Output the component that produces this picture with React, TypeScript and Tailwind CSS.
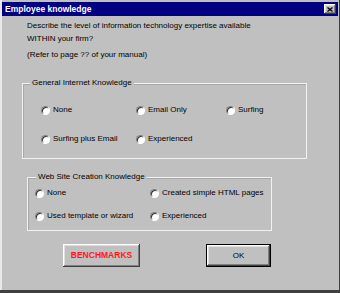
import React from 'react';

const raised =
  'shadow-[inset_-1px_-1px_#404040,inset_1px_1px_#ffffff,inset_-2px_-2px_#808080,inset_2px_2px_#dfdfdf]';

const Radio: React.FC<{ label: string }> = ({ label }) => (
  <label className="flex items-center gap-[3px] h-[12px] leading-[12px] whitespace-nowrap">
    <span className="w-[9px] h-[9px] shrink-0 rounded-full bg-white border border-t-[#808080] border-l-[#808080] border-b-white border-r-white shadow-[inset_1px_1px_0_#303030]" />
    <span>{label}</span>
  </label>
);

const GroupBox: React.FC<{ title: string; className: string; legendLeft: string; children: React.ReactNode }> = ({
  title,
  className,
  legendLeft,
  children,
}) => (
  <div className={`relative border border-[#f2f2f2] shadow-[inset_1px_1px_0_#a8a8a8] ${className}`}>
    <span className={`absolute -top-[6px] ${legendLeft} bg-[#c0c0c0] px-[2px] leading-[10px]`}>{title}</span>
    {children}
  </div>
);

export default function App() {
  return (
    <div
      className="w-[340px] h-[293px] bg-[#c0c0c0] flex flex-col text-[8px] text-black shadow-[inset_-1px_-3px_#404040,inset_2px_0_#e8e8e8]"
      style={{ fontFamily: '"Liberation Sans", Arial, sans-serif' }}
    >
      {/* Title bar */}
      <div className="mt-[2px] mx-[2px] h-[14px] bg-[#000080] flex items-center justify-between pl-[3px] pr-[2px]">
        <span className="text-white font-bold text-[8.5px] leading-[14px]">Employee knowledge</span>
        <button className={`w-[12px] h-[10px] bg-[#c0c0c0] flex items-center justify-center ${raised}`}>
          <svg width="6" height="5" viewBox="0 0 6 5">
            <path d="M0.5 0.5 L5.5 4.5 M5.5 0.5 L0.5 4.5" stroke="#000" strokeWidth="1.3" />
          </svg>
        </button>
      </div>

      {/* Question */}
      <div className="pl-[27px] mt-[3px] leading-[13px]">
        <p>Describe the level of information technology expertise available</p>
        <p>WITHIN your firm?</p>
        <p className="mt-[3px]">(Refer to page ?? of your manual)</p>
      </div>

      <GroupBox title="General Internet Knowledge" className="mt-[22px] ml-[22px] w-[285px] h-[76px]" legendLeft="left-[7px]">
        <div className="grid grid-cols-[95px_90px_1fr] gap-y-[17px] pt-[20px] pl-[18px]">
          <Radio label="None" />
          <Radio label="Email Only" />
          <Radio label="Surfing" />
          <Radio label="Surfing plus Email" />
          <Radio label="Experienced" />
        </div>
      </GroupBox>

      <GroupBox title="Web Site Creation Knowledge" className="mt-[18px] ml-[27px] w-[245px] h-[54px]" legendLeft="left-[8px]">
        <div className="grid grid-cols-[115px_1fr] gap-y-[11px] pt-[9px] pl-[7px]">
          <Radio label="None" />
          <Radio label="Created simple HTML pages" />
          <Radio label="Used template or wizard" />
          <Radio label="Experienced" />
        </div>
      </GroupBox>

      {/* Buttons */}
      <div className="flex mt-[13px] pl-[63px] gap-[66px]">
        <button className={`w-[77px] h-[23px] bg-[#c0c0c0] ${raised} text-[#ff1a1a] font-bold text-[8.5px]`}>
          BENCHMARKS
        </button>
        <button className="w-[65px] h-[23px] bg-[#c0c0c0] border border-black shadow-[inset_-1px_-1px_#404040,inset_1px_1px_#ffffff,inset_-2px_-2px_#808080,inset_2px_2px_#dfdfdf] text-[8px]">
          OK
        </button>
      </div>
    </div>
  );
}
